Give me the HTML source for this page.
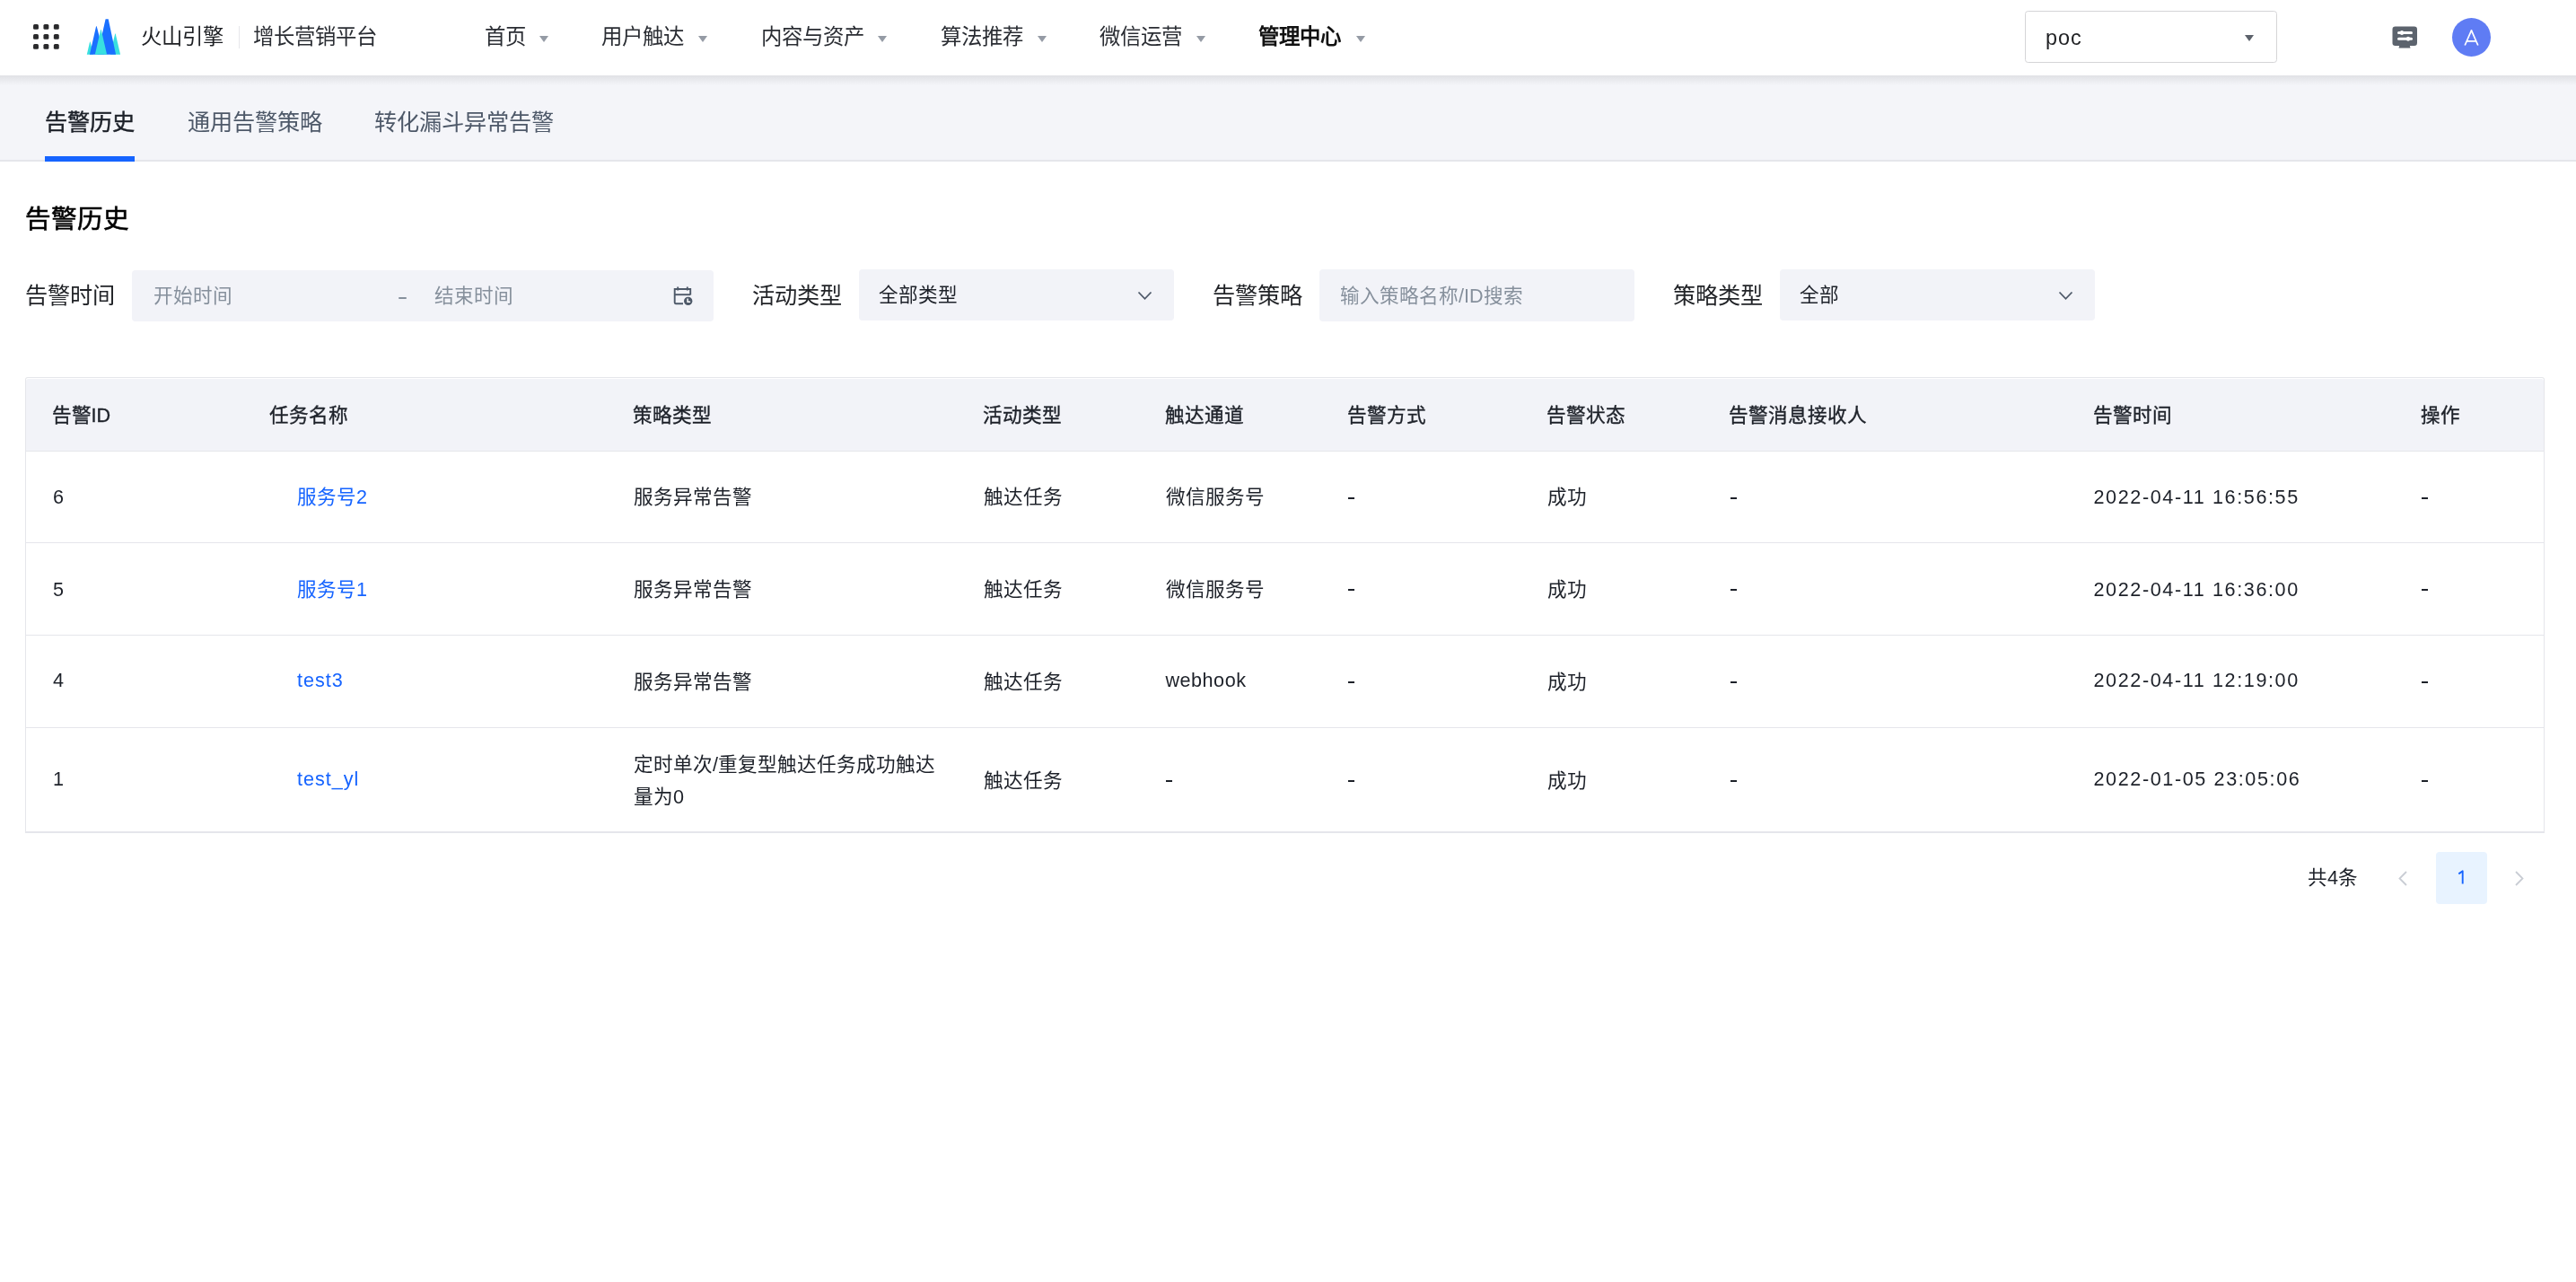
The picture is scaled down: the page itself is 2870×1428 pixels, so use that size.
<!DOCTYPE html>
<html lang="zh-CN">
<head>
<meta charset="utf-8">
<style>
*{margin:0;padding:0;box-sizing:border-box}
html,body{width:2870px;height:1428px;overflow:hidden;background:#fff}
body{position:relative;font-family:"Liberation Sans",sans-serif;color:#1d2129}
.a{position:absolute;white-space:nowrap}
/* header */
#hdr{position:absolute;left:0;top:0;width:2870px;height:84px;background:#fff;z-index:2}
#hdrsh{position:absolute;left:0;top:84px;width:2870px;height:11px;background:linear-gradient(#e0e1e5,rgba(244,245,249,0));z-index:1}
.nav{font-size:23.4px;line-height:24px;color:#2a2d33;top:29px}
.tri{position:absolute;width:0;height:0;border-left:5px solid transparent;border-right:5px solid transparent;border-top:7px solid #959ba5}
/* tabs */
#tabs{position:absolute;left:0;top:84px;width:2870px;height:96px;background:#f4f5f9;border-bottom:2px solid #e5e6eb}
.tab{font-size:25.2px;line-height:26px;color:#4e5969}
.lbl{font-size:25.2px;line-height:26px;color:#222428}
.inp{position:absolute;top:301px;height:57px;background:#f2f3f8;border-radius:4px}
.ph{font-size:21.6px;line-height:22px;color:#86909c}
.val{font-size:21.6px;line-height:22px;color:#1d2129}
/* table */
#tbl{position:absolute;left:28px;top:420px;width:2807px;height:508px;border:1px solid #e5e6eb;border-bottom:2px solid #e5e6eb;border-radius:3px 3px 0 0;overflow:hidden}
#thead{position:absolute;left:0;top:1px;width:100%;height:81px;border-radius:3px 3px 0 0;background:#f2f3f8;border-bottom:1px solid #e5e6eb}
.rowb{position:absolute;left:0;width:100%;height:1px;background:#e5e6eb}
.th{font-size:21.6px;line-height:22px;color:#1d2129;-webkit-text-stroke:0.35px #1d2129}
.td{font-size:21.6px;line-height:22px;color:#1d2129}
.lnk{color:#1664ff}
.num{letter-spacing:1.6px}
</style>
</head>
<body>
<div id="root" style="position:absolute;left:0;top:0;width:2870px;height:1428px;will-change:transform">
<div id="hdr">
  <!-- grid icon -->
  <svg class="a" style="left:37px;top:27px" width="30" height="29" viewBox="0 0 30 29"><g fill="#2a2a2c"><rect x="0.05" y="0.05" width="5.9" height="5.8" rx="1.5"/><rect x="11.45" y="0.05" width="5.9" height="5.8" rx="1.5"/><rect x="22.85" y="0.05" width="5.9" height="5.8" rx="1.5"/><rect x="0.05" y="11.05" width="5.9" height="5.8" rx="1.5"/><rect x="11.45" y="11.05" width="5.9" height="5.8" rx="1.5"/><rect x="22.85" y="11.05" width="5.9" height="5.8" rx="1.5"/><rect x="0.05" y="22.05" width="5.9" height="5.8" rx="1.5"/><rect x="11.45" y="22.05" width="5.9" height="5.8" rx="1.5"/><rect x="22.85" y="22.05" width="5.9" height="5.8" rx="1.5"/></g></svg>
  <!-- logo -->
  <svg class="a" style="left:90px;top:15px" width="50" height="50" viewBox="0 0 50 50">
    <polygon points="6.8,45.7 10.1,31.4 10.6,31.4 13.9,45.7" fill="#38e0e0"/>
    <polygon points="32.8,45.7 38.2,22.6 38.7,22.6 44.1,45.7" fill="#38e0e0"/>
    <polygon points="9.9,45.7 17.1,14.3 17.7,14.3 25.9,45.7" fill="#1a70ff"/>
    <polygon points="18.7,45.7 27.6,6.3 30.7,6.3 39.1,45.7" fill="#1a70ff"/>
    <polygon points="15.8,45.7 22.2,18.1 22.7,18.1 29.1,45.7" fill="#38e0e0"/>
  </svg>
  <div class="a nav" style="left:157px;top:29px;color:#1d1f23">火山引擎</div>
  <div class="a" style="left:265.5px;top:29px;width:1.2px;height:25px;background:#e6e7ea"></div>
  <div class="a nav" style="left:282px;top:29px">增长营销平台</div>

  <div class="a nav" style="left:540px;top:29px">首页</div><div class="tri" style="left:601px;top:40px"></div>
  <div class="a nav" style="left:670px;top:29px">用户触达</div><div class="tri" style="left:778px;top:40px"></div>
  <div class="a nav" style="left:848px;top:29px">内容与资产</div><div class="tri" style="left:978px;top:40px"></div>
  <div class="a nav" style="left:1048px;top:29px">算法推荐</div><div class="tri" style="left:1156px;top:40px"></div>
  <div class="a nav" style="left:1225px;top:29px">微信运营</div><div class="tri" style="left:1333px;top:40px"></div>
  <div class="a nav" style="left:1402px;top:29px;font-weight:700;color:#111">管理中心</div><div class="tri" style="left:1511px;top:40px"></div>

  <!-- project select -->
  <div class="a" style="left:2256px;top:12px;width:281px;height:58px;border:1.3px solid #d5d5d7;border-radius:3.5px;background:#fff"></div>
  <div class="a" style="left:2279px;top:29.6px;font-size:23.4px;line-height:24px;letter-spacing:1px;color:#1f2023">poc</div>
  <div class="tri" style="left:2501px;top:39px;border-left-width:5.5px;border-right-width:5.5px;border-top-width:7.5px;border-top-color:#5c626b"></div>

  <!-- message icon -->
  <svg class="a" style="left:2665px;top:28.5px" width="29" height="26" viewBox="0 0 29 26">
    <rect x="0.5" y="0.5" width="27.5" height="21.5" rx="3.2" fill="#5c636d"/>
    <polygon points="8.5,21 19.5,21 20.5,24.5 7.5,24.5" fill="#5c636d"/>
    <rect x="6" y="6" width="17" height="3" rx="1.5" fill="#fff"/>
    <rect x="9" y="5" width="4" height="5" rx="2" fill="#fff"/>
    <rect x="6" y="12.8" width="17" height="3" rx="1.5" fill="#fff"/>
    <rect x="16" y="11.8" width="4" height="5" rx="2" fill="#fff"/>
  </svg>
  <!-- avatar -->
  <div class="a" style="left:2732px;top:20px;width:43px;height:43px;border-radius:50%;background:#5f7cf4"></div>
  <svg class="a" style="left:2745px;top:33px" width="17" height="18" viewBox="0 0 17 18">
    <path d="M1.2 17.5 L8.5 0.8 L15.8 17.5 M3.6 12.8 H13.4" stroke="#fff" stroke-width="1.7" fill="none"/>
  </svg>
</div>
<div id="hdrsh"></div>

<div id="tabs">
</div>
<div class="a tab" style="left:50px;top:123px;color:#1d2129;-webkit-text-stroke:0.45px #1d2129">告警历史</div>
<div class="a tab" style="left:209px;top:123px">通用告警策略</div>
<div class="a tab" style="left:417px;top:123px">转化漏斗异常告警</div>
<div class="a" style="left:50px;top:174px;width:100px;height:6px;background:#1664ff"></div>

<!-- title -->
<div class="a" style="left:28px;top:230px;font-size:28.6px;line-height:29px;color:#000;-webkit-text-stroke:0.6px #000">告警历史</div>

<!-- filters -->
<div class="a lbl" style="left:28px;top:316px">告警时间</div>
<div class="inp" style="left:147px;width:648px"></div>
<div class="a ph" style="left:171px;top:319px">开始时间</div>
<div class="a" style="left:444px;top:331px;width:8.7px;height:2px;border-radius:1px;background:#86909c"></div>
<div class="a ph" style="left:484px;top:319px">结束时间</div>
<svg class="a" style="left:749px;top:318px" width="24" height="23" viewBox="0 0 24 23">
  <g fill="none" stroke="#4e5969" stroke-width="1.9">
    <path d="M12 20.2 H3.8 Q2.7 20.2 2.7 19 V4 H20.2 V10.5"/>
    <path d="M2.7 10.2 H20.2"/>
    <path d="M6.2 1.5 V5.5 M16.8 1.5 V5.5"/>
  </g>
  <circle cx="17.7" cy="17.4" r="4.7" fill="#4e5969"/>
  <path d="M17.1 14.4 V18.2 H20.1" stroke="#fff" stroke-width="1.5" fill="none"/>
</svg>

<div class="a lbl" style="left:838px;top:316px">活动类型</div>
<div class="inp" style="left:957px;width:351px;top:300px"></div>
<div class="a val" style="left:979px;top:318px">全部类型</div>
<svg class="a" style="left:1267px;top:324px" width="17" height="11" viewBox="0 0 17 11"><path d="M1.5 1.5 L8.5 8.8 L15.5 1.5" stroke="#4e5969" stroke-width="1.8" fill="none"/></svg>

<div class="a lbl" style="left:1351px;top:316px">告警策略</div>
<div class="inp" style="left:1470px;width:351px;top:300px;height:58px"></div>
<div class="a ph" style="left:1493px;top:319px">输入策略名称/ID搜索</div>

<div class="a lbl" style="left:1864px;top:316px">策略类型</div>
<div class="inp" style="left:1983px;width:351px;top:300px"></div>
<div class="a val" style="left:2005px;top:318px">全部</div>
<svg class="a" style="left:2293px;top:324px" width="17" height="11" viewBox="0 0 17 11"><path d="M1.5 1.5 L8.5 8.8 L15.5 1.5" stroke="#4e5969" stroke-width="1.8" fill="none"/></svg>

<!-- table -->
<div id="tbl">
  <div id="thead"></div>
  <div class="rowb" style="top:183px"></div>
  <div class="rowb" style="top:286px"></div>
  <div class="rowb" style="top:389px"></div>
</div>
<div class="a th" style="left:57.5px;top:452px">告警ID</div>
<div class="a th" style="left:300px;top:452px">任务名称</div>
<div class="a th" style="left:705px;top:452px">策略类型</div>
<div class="a th" style="left:1095px;top:452px">活动类型</div>
<div class="a th" style="left:1297.5px;top:452px">触达通道</div>
<div class="a th" style="left:1500.5px;top:452px">告警方式</div>
<div class="a th" style="left:1723px;top:452px">告警状态</div>
<div class="a th" style="left:1926px;top:452px">告警消息接收人</div>
<div class="a th" style="left:2331.5px;top:452px">告警时间</div>
<div class="a th" style="left:2697px;top:452px">操作</div>
<div class="a td" style="left:59px;top:543.3px;">6</div>
<div class="a td lnk" style="left:331px;top:543.3px;">服务号2</div>
<div class="a td" style="left:706px;top:543.3px;">服务异常告警</div>
<div class="a td" style="left:1096px;top:543.3px;">触达任务</div>
<div class="a td" style="left:1298.5px;top:543.3px;">微信服务号</div>
<div class="a" style="left:1502px;top:554px;width:7px;height:2px;background:#1d2129"></div>
<div class="a td" style="left:1724px;top:543.3px;">成功</div>
<div class="a" style="left:1928px;top:554px;width:7px;height:2px;background:#1d2129"></div>
<div class="a td num" style="left:2332.5px;top:543.3px;">2022-04-11 16:56:55</div>
<div class="a" style="left:2698px;top:554px;width:7px;height:2px;background:#1d2129"></div>
<div class="a td" style="left:59px;top:646px;">5</div>
<div class="a td lnk" style="left:331px;top:646px;">服务号1</div>
<div class="a td" style="left:706px;top:646px;">服务异常告警</div>
<div class="a td" style="left:1096px;top:646px;">触达任务</div>
<div class="a td" style="left:1298.5px;top:646px;">微信服务号</div>
<div class="a" style="left:1502px;top:656px;width:7px;height:2px;background:#1d2129"></div>
<div class="a td" style="left:1724px;top:646px;">成功</div>
<div class="a" style="left:1928px;top:656px;width:7px;height:2px;background:#1d2129"></div>
<div class="a td num" style="left:2332.5px;top:646px;">2022-04-11 16:36:00</div>
<div class="a" style="left:2698px;top:656px;width:7px;height:2px;background:#1d2129"></div>
<div class="a td" style="left:59px;top:747.2px;">4</div>
<div class="a td lnk" style="left:331px;top:746.7px;letter-spacing:1px;">test3</div>
<div class="a td" style="left:706px;top:748.7px;">服务异常告警</div>
<div class="a td" style="left:1096px;top:748.7px;">触达任务</div>
<div class="a td" style="left:1298.5px;top:747.2px;letter-spacing:0.5px;">webhook</div>
<div class="a" style="left:1502px;top:759px;width:7px;height:2px;background:#1d2129"></div>
<div class="a td" style="left:1724px;top:748.7px;">成功</div>
<div class="a" style="left:1928px;top:759px;width:7px;height:2px;background:#1d2129"></div>
<div class="a td num" style="left:2332.5px;top:747.2px;">2022-04-11 12:19:00</div>
<div class="a" style="left:2698px;top:759px;width:7px;height:2px;background:#1d2129"></div>
<div class="a td" style="left:59px;top:857.0px;">1</div>
<div class="a td lnk" style="left:331px;top:856.5px;letter-spacing:1px;">test_yl</div>
<div class="a td" style="left:706px;top:833.5px;line-height:36px">定时单次/重复型触达任务成功触达<br>量为0</div>
<div class="a td" style="left:1096px;top:858.5px;">触达任务</div>
<div class="a" style="left:1299px;top:869px;width:7px;height:2px;background:#1d2129"></div>
<div class="a" style="left:1502px;top:869px;width:7px;height:2px;background:#1d2129"></div>
<div class="a td" style="left:1724px;top:858.5px;">成功</div>
<div class="a" style="left:1928px;top:869px;width:7px;height:2px;background:#1d2129"></div>
<div class="a td num" style="left:2332.5px;top:857.0px;">2022-01-05 23:05:06</div>
<div class="a" style="left:2698px;top:869px;width:7px;height:2px;background:#1d2129"></div>

<!-- pagination -->
<div class="a td" style="left:2571px;top:967px">共4条</div>
<svg class="a" style="left:2670px;top:969px" width="14" height="19" viewBox="0 0 14 19"><path d="M11 2 L3.5 9.5 L11 17" stroke="#c9cdd4" stroke-width="1.8" fill="none"/></svg>
<div class="a" style="left:2714px;top:949px;width:57px;height:58px;border-radius:4px;background:#e8f3ff"></div>
<svg class="a" style="left:2735px;top:966px" width="14" height="22" viewBox="0 0 14 22"><path d="M4.3 7.4 L8.7 4.3 V18.6" stroke="#1664ff" stroke-width="1.9" stroke-linejoin="round" fill="none"/></svg>
<svg class="a" style="left:2800px;top:969px" width="14" height="19" viewBox="0 0 14 19"><path d="M3 2 L10.5 9.5 L3 17" stroke="#c9cdd4" stroke-width="1.8" fill="none"/></svg>
</div>
</body>
</html>
